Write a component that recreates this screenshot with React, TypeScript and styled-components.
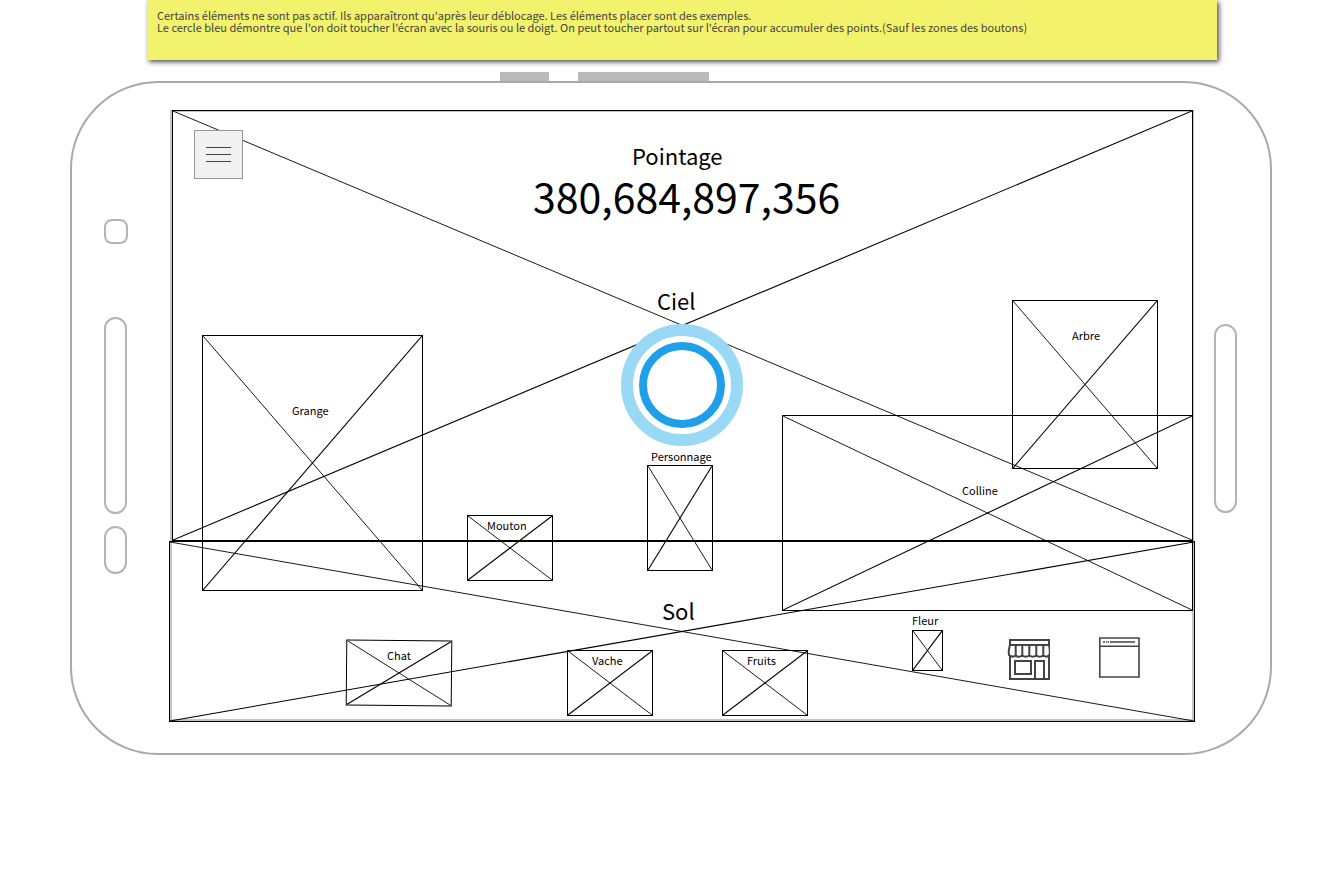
import React from "react";
import styled, { createGlobalStyle } from "styled-components";

const GlobalStyle = createGlobalStyle`
  *, *::before, *::after { box-sizing: border-box; }
  body {
    margin: 0;
    background: #fff;
    color: #000;
    font-family: "Noto Sans CJK JP", "Noto Sans", sans-serif;
  }
  button { font: inherit; padding: 0; cursor: pointer; }
`;

const Page = styled.main`
  display: flex;
  flex-direction: column;
  padding: 0 60px 0 70px;
`;

const Note = styled.aside`
  height: 60px;
  margin: 0 55px 0 77px;
  padding: 9px 10px;
  background: #f2f26d;
  box-shadow: 2px 2px 5px rgba(0, 0, 0, 0.7);
  color: #444;
  font-size: 11px;
  line-height: 12px;
`;

const NoteLine = styled.p`
  margin: 0;
`;

const TopKeys = styled.div`
  display: flex;
  gap: 29px;
  margin-top: 12px;
  padding-left: 430px;
`;

const TopKey = styled.div<{ $width: number }>`
  width: ${(p) => p.$width}px;
  height: 9px;
  background: #bababa;
`;

const Phone = styled.section`
  display: flex;
  padding: 27px 0 31px;
  border: 2px solid #a9a9a9;
  border-radius: 88px;
`;

const Bezel = styled.div<{ $side: "left" | "right" }>`
  display: flex;
  flex-direction: column;
  flex: none;
  width: ${(p) => (p.$side === "left" ? 97 : 75)}px;
  padding: ${(p) => (p.$side === "left" ? "109px 0 0 32px" : "214px 0 0 19px")};
`;

const Slot = styled.div<{ $height: number; $round?: number; $gap?: number }>`
  width: ${(p) => (p.$round ? 24 : 23)}px;
  height: ${(p) => p.$height}px;
  margin-top: ${(p) => p.$gap || 0}px;
  border: 2px solid #b4b4b4;
  border-radius: ${(p) => p.$round || 12}px;
`;

const Screen = styled.div`
  position: relative;
  flex: 1;
  min-width: 0;
  &::before {
    content: "";
    position: absolute;
    inset: 0 1px 1px;
    border: 2px solid #c4c4c4;
  }
`;

const Zone = styled.div<{ $height: number; $inset?: boolean }>`
  position: relative;
  height: ${(p) => p.$height}px;
  margin: ${(p) => (p.$inset ? "0 2px 0 3px" : "0")};
  border: 1px solid #000;
`;

const Item = styled.div<{ $x: number; $y: number; $w: number; $h: number; $tilt?: boolean }>`
  position: absolute;
  left: ${(p) => p.$x}px;
  top: ${(p) => p.$y}px;
  width: ${(p) => p.$w}px;
  height: ${(p) => p.$h}px;
  border: 1px solid #000;
  ${(p) => p.$tilt && "transform: rotate(0.5deg);"}
`;

const CrossSvg = styled.svg`
  display: block;
  position: absolute;
  inset: 0;
  width: 100%;
  height: 100%;
  stroke: #000;
`;

const Label = styled.span<{ $x: number; $y: number }>`
  position: absolute;
  left: ${(p) => p.$x}px;
  top: ${(p) => p.$y}px;
  font-size: 11px;
  line-height: 14px;
  white-space: nowrap;
`;

const Title = styled.h2<{ $x: number; $y: number }>`
  position: absolute;
  left: ${(p) => p.$x}px;
  top: ${(p) => p.$y}px;
  margin: 0;
  font-size: 22px;
  font-weight: 400;
  line-height: 28px;
  white-space: nowrap;
`;

const Score = styled.output`
  position: absolute;
  left: 364px;
  top: 60px;
  font-size: 41px;
  line-height: 50px;
`;

const MenuButton = styled.button`
  position: absolute;
  left: 25px;
  top: 20px;
  display: flex;
  flex-direction: column;
  align-items: center;
  justify-content: center;
  gap: 6px;
  width: 49px;
  height: 49px;
  background: #f1f1f1;
  border: 1px solid #969696;
`;

const MenuBar = styled.span`
  width: 25px;
  height: 1px;
  background: #444;
`;

const TapButton = styled.button`
  position: absolute;
  left: 452px;
  top: 214px;
  display: grid;
  place-items: center;
  width: 122px;
  height: 122px;
  background: #fff;
  border: 12px solid #9ad9f6;
  border-radius: 50%;
`;

const TapRing = styled.span`
  width: 86px;
  height: 86px;
  border: 8px solid #1e9fe8;
  border-radius: 50%;
`;

const IconButton = styled.button<{ $x: number; $y: number }>`
  position: absolute;
  left: ${(p) => p.$x}px;
  top: ${(p) => p.$y}px;
  width: 44px;
  height: 42px;
  background: none;
  border: 0;
  svg { display: block; fill: none; stroke: #444; }
`;

function Cross() {
  return (
    <CrossSvg aria-hidden="true">
      <line x1="0" y1="0" x2="100%" y2="100%" strokeWidth="0.9" />
      <line x1="0" y1="100%" x2="100%" y2="0" strokeWidth="1.1" />
    </CrossSvg>
  );
}

const items = [
  { name: "Grange", x: 33, y: 225, w: 221, h: 256, lx: 123, ly: 293 },
  { name: "Mouton", x: 298, y: 405, w: 86, h: 66, lx: 318, ly: 408 },
  { name: "Personnage", x: 478, y: 355, w: 66, h: 106, lx: 482, ly: 339 },
  { name: "Colline", x: 613, y: 305, w: 411, h: 196, lx: 793, ly: 373 },
  { name: "Arbre", x: 843, y: 190, w: 146, h: 169, lx: 903, ly: 218 },
  { name: "Chat", x: 177, y: 530, w: 106, h: 66, lx: 218, ly: 538, tilt: true },
  { name: "Vache", x: 398, y: 540, w: 86, h: 66, lx: 423, ly: 543 },
  { name: "Fruits", x: 553, y: 540, w: 86, h: 66, lx: 578, ly: 543 },
  { name: "Fleur", x: 743, y: 520, w: 31, h: 41, lx: 743, ly: 503 },
];

export default function App() {
  return (
    <>
      <GlobalStyle />
      <Page>
        <Note>
          <NoteLine>
            Certains éléments ne sont pas actif. Ils apparaîtront qu'après leur déblocage. Les éléments placer sont des exemples.
          </NoteLine>
          <NoteLine>
            Le cercle bleu démontre que l'on doit toucher l'écran avec la souris ou le doigt. On peut toucher partout sur l'écran pour accumuler des points.(Sauf les zones des boutons)
          </NoteLine>
        </Note>
        <TopKeys>
          <TopKey $width={49} />
          <TopKey $width={131} />
        </TopKeys>
        <Phone>
          <Bezel $side="left">
            <Slot $height={25} $round={8} />
            <Slot $height={197} $gap={73} />
            <Slot $height={48} $gap={12} />
          </Bezel>
          <Screen>
            <Zone $height={431} $inset>
              <Cross />
            </Zone>
            <Zone $height={181}>
              <Cross />
            </Zone>
            {items.map((it) => (
              <React.Fragment key={it.name}>
                <Item $x={it.x} $y={it.y} $w={it.w} $h={it.h} $tilt={it.tilt}>
                  <Cross />
                </Item>
                <Label $x={it.lx} $y={it.ly}>{it.name}</Label>
              </React.Fragment>
            ))}
            <Title $x={463} $y={31}>Pointage</Title>
            <Score>380,684,897,356</Score>
            <Title $x={488} $y={176}>Ciel</Title>
            <Title $x={493} $y={486}>Sol</Title>
            <TapButton aria-label="Toucher">
              <TapRing />
            </TapButton>
            <MenuButton aria-label="Menu">
              <MenuBar />
              <MenuBar />
              <MenuBar />
            </MenuButton>
            <IconButton $x={837} $y={529} aria-label="Boutique">
              <svg width="44" height="42" viewBox="0 0 44 42" strokeWidth="2">
                <path d="M4 6V1H43V6M4 17V40H43V17" />
                <path d="M4 6H43M4 6C2.500 10 2.500 13 3 16Q6 19 9.700 16.500Q13 19 16.300 16.500Q19.700 19 23.300 16.500Q26.700 19 30.300 16.500Q33.700 19 37.300 16.500Q41 19 43.500 16C44 13 44 10 43 6" />
                <path d="M9.700 6V17M16.300 6V17M23.300 6V17M30.300 6V17M37.300 6V17" />
                <path d="M9 22H25V35H9ZM29 40V22H38V40" />
              </svg>
            </IconButton>
            <IconButton $x={930} $y={527} aria-label="Fenêtre">
              <svg width="44" height="42" viewBox="0 0 44 42">
                <path d="M0.800 1H40V40H0.800ZM1 9.200H40" strokeWidth="1.600" />
                <path d="M4 5H6M7 5H8.500M9 5H10M11 5H36" strokeWidth="1.700" />
              </svg>
            </IconButton>
          </Screen>
          <Bezel $side="right">
            <Slot $height={189} />
          </Bezel>
        </Phone>
      </Page>
    </>
  );
}
